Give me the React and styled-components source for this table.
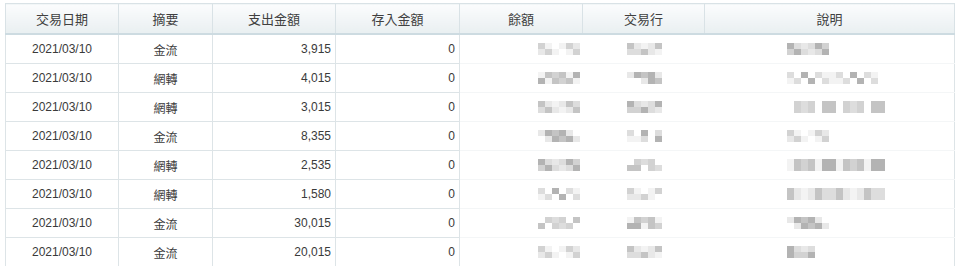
import styled, { createGlobalStyle } from "styled-components";

const GlobalStyle = createGlobalStyle`
  body {
    margin: 0;
    background: #fff;
    font-family: "Liberation Sans", "Noto Sans CJK TC", sans-serif;
  }
`;

const Wrap = styled.div`
  padding: 3px 10px 0 5px;
`;

const Table = styled.table`
  border-collapse: collapse;
  table-layout: fixed;
  width: 949px;
  font-size: 12px;
  color: #3a3a3a;
`;

const Th = styled.th`
  height: 29px;
  padding: 0;
  font-weight: normal;
  font-size: 13px;
  color: #404040;
  background: linear-gradient(#fbfcfd, #e9eff1);
  border: 1px solid #d9e2e6;
  border-bottom: 2px solid #cddbe1;
`;

const Td = styled.td`
  height: 28px;
  padding: 0 ${(p) => (p.$align === "right" ? "4px" : "2px")};
  text-align: ${(p) => p.$align || "center"};
  border: 1px solid #dde4e7;
  border-right-color: ${(p) => (p.$hidden ? "transparent" : "#dde4e7")};
  border-bottom-color: ${(p) => (p.$hidden ? "#f4f6f7" : "#dde4e7")};
  background: #fff;
`;

const LastTd = styled(Td)`
  border-right-color: #dde4e7;
`;

const Pixels = styled.div`
  display: grid;
  grid-template-columns: repeat(${(p) => p.$cols}, 7px);
  grid-auto-rows: 6px;
  margin-left: ${(p) => p.$offset}px;
  width: max-content;
`;

const Px = styled.span`
  display: block;
  background: ${(p) => p.$c};
`;

const shades = ["#fff", "#f3f3f3", "#e8e8e8", "#dddddd", "#d2d2d2", "#c4c4c4", "#b3b3b3"];

function Blur({ cols, offset, seed }) {
  const cells = [];
  for (let i = 0; i < cols * 2; i++) {
    const v = (seed * 31 + i * 17 + ((i * i + seed) % 7)) % 7;
    cells.push(<Px key={i} $c={shades[v]} />);
  }
  return (
    <Pixels $cols={cols} $offset={offset}>
      {cells}
    </Pixels>
  );
}

const rows = [
  { kind: "金流", out: "3,915", desc: 6 },
  { kind: "網轉", out: "4,015", desc: 13 },
  { kind: "網轉", out: "3,015", desc: 14 },
  { kind: "金流", out: "8,355", desc: 6 },
  { kind: "網轉", out: "2,535", desc: 14 },
  { kind: "網轉", out: "1,580", desc: 14 },
  { kind: "金流", out: "30,015", desc: 6 },
  { kind: "金流", out: "20,015", desc: 4 },
];

const widths = [113, 94, 123, 124, 123, 122, 250];
const heads = ["交易日期", "摘要", "支出金額", "存入金額", "餘額", "交易行", "說明"];

export default function App() {
  return (
    <Wrap lang="zh-Hant-TW">
      <GlobalStyle />
      <Table>
        <colgroup>
          {widths.map((w, i) => (
            <col key={i} style={{ width: w }} />
          ))}
        </colgroup>
        <thead>
          <tr>
            {heads.map((h) => (
              <Th key={h}>{h}</Th>
            ))}
          </tr>
        </thead>
        <tbody>
          {rows.map((r, i) => (
            <tr key={i}>
              <Td>2021/03/10</Td>
              <Td>{r.kind}</Td>
              <Td $align="right">{r.out}</Td>
              <Td $align="right">0</Td>
              <Td $hidden $align="left">
                <Blur cols={6} offset={76} seed={i + 1} />
              </Td>
              <Td $hidden $align="left">
                <Blur cols={5} offset={42} seed={i + 3} />
              </Td>
              <LastTd $hidden $align="left">
                <Blur cols={r.desc} offset={80} seed={i + 5} />
              </LastTd>
            </tr>
          ))}
        </tbody>
      </Table>
    </Wrap>
  );
}
